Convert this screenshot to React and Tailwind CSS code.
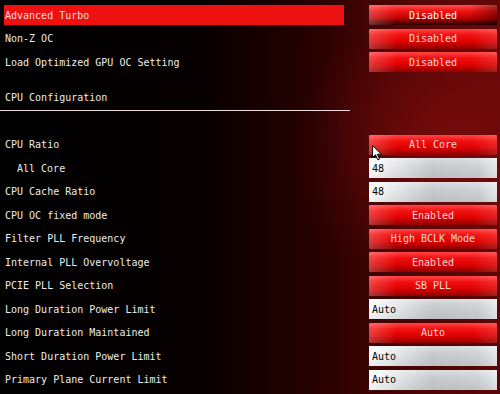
import React from 'react';

const font = { fontFamily: '"DejaVu Sans Mono", "Liberation Mono", monospace' };

const topRows = [
  { label: 'Advanced Turbo', value: 'Disabled', type: 'select', active: true },
  { label: 'Non-Z OC', value: 'Disabled', type: 'select' },
  { label: 'Load Optimized GPU OC Setting', value: 'Disabled', type: 'select' },
];

const cpuRows = [
  { label: 'CPU Ratio', value: 'All Core', type: 'select' },
  { label: 'All Core', value: '48', type: 'field', indent: true },
  { label: 'CPU Cache Ratio', value: '48', type: 'field' },
  { label: 'CPU OC fixed mode', value: 'Enabled', type: 'select' },
  { label: 'Filter PLL Frequency', value: 'High BCLK Mode', type: 'select' },
  { label: 'Internal PLL Overvoltage', value: 'Enabled', type: 'select' },
  { label: 'PCIE PLL Selection', value: 'SB PLL', type: 'select' },
  { label: 'Long Duration Power Limit', value: 'Auto', type: 'field' },
  { label: 'Long Duration Maintained', value: 'Auto', type: 'select' },
  { label: 'Short Duration Power Limit', value: 'Auto', type: 'field' },
  { label: 'Primary Plane Current Limit', value: 'Auto', type: 'field' },
];

const SelectBox = ({ value, active }) => (
  <div
    className={`w-[128px] h-[20px] flex items-center justify-center rounded-[1px] text-[10px] ${
      active
        ? 'text-white bg-[linear-gradient(to_right,rgba(255,255,255,0.22),transparent_22%,transparent_78%,rgba(0,0,0,0.35)),linear-gradient(to_bottom,#ff5050_0%,#f01212_30%,#c00000_65%,#2a0000_100%)]'
        : 'text-[#ffd6d6] bg-[linear-gradient(to_right,rgba(255,255,255,0.22),transparent_22%,transparent_80%,rgba(255,255,255,0.12)),linear-gradient(to_bottom,#ff4646_0%,#f21010_30%,#dc0000_65%,#8c0000_100%)]'
    }`}
  >
    {value}
  </div>
);

const Field = ({ value }) => (
  <div className="w-[128px] h-[20px] flex items-center pl-[3px] text-[10px] text-black bg-[linear-gradient(to_bottom,rgba(255,255,255,0.35),transparent_40%,rgba(0,0,0,0.06)_100%),linear-gradient(to_right,#ffffff_0%,#e8eaec_18%,#c6cacd_50%,#cdd1d4_85%,#e6e8ea_100%)]">
    {value}
  </div>
);

const Row = ({ row }) => (
  <div className="h-[23.5px] flex items-center">
    <div
      className={`ml-[4px] w-[340px] h-[20px] flex items-center text-[10px] ${
        row.active ? 'bg-[#ee1111] text-[#ffdede]' : 'text-[#ececec]'
      } ${row.indent ? 'pl-[13px]' : 'pl-[1px]'}`}
    >
      {row.label}
    </div>
    <div className="ml-[25px]">
      {row.type === 'select' ? (
        <SelectBox value={row.value} active={row.active} />
      ) : (
        <Field value={row.value} />
      )}
    </div>
  </div>
);

export default function App() {
  return (
    <div
      style={font}
      className="relative w-[500px] h-[394px] overflow-hidden pt-[3.25px] bg-[radial-gradient(ellipse_30%_35%_at_88%_38%,rgba(140,14,14,0.55),transparent),radial-gradient(ellipse_40%_60%_at_100%_10%,rgba(110,8,8,0.5),transparent),linear-gradient(to_right,#000000_0%,#070000_40%,#2a0101_65%,#4e0505_85%,#5c0707_100%)]"
    >
      {topRows.map((row) => (
        <Row key={row.label} row={row} />
      ))}

      <div className="mt-[11.5px] h-[23.5px] flex items-center pl-[5px] text-[10px] text-[#ececec]">
        CPU Configuration
      </div>
      <div className="mt-[1.5px] w-[350px] h-px bg-[#eedede]" />

      <div className="mt-[21.5px]">
        {cpuRows.map((row) => (
          <Row key={row.label + row.value} row={row} />
        ))}
      </div>

      {/* mouse pointer */}
      <svg
        className="absolute left-[372px] top-[145px]"
        width="11"
        height="16"
        viewBox="0 0 11 16"
      >
        <path
          d="M0.5 0.5 L0.5 12.5 L3.5 9.8 L5.8 14.8 L7.6 14 L5.4 9.2 L9.5 9.2 Z"
          fill="#ffffff"
          stroke="#000000"
          strokeWidth="1"
        />
      </svg>
    </div>
  );
}
